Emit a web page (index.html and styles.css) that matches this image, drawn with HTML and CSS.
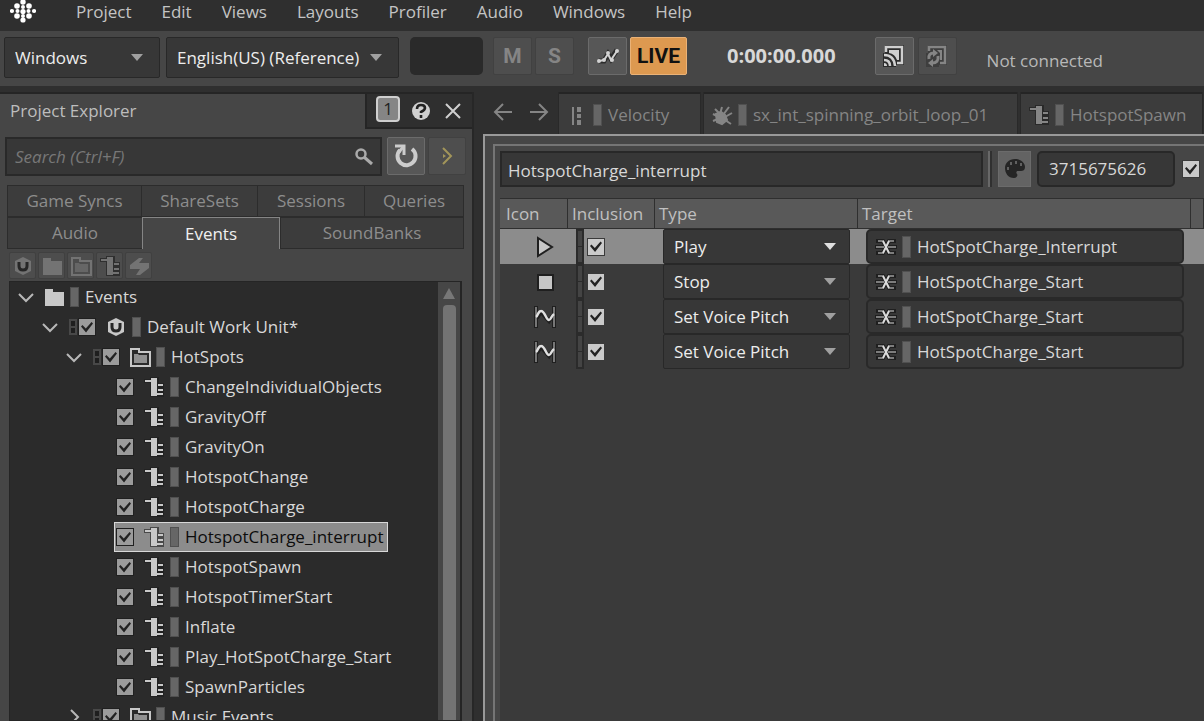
FILE: index.html
```html
<!DOCTYPE html>
<html lang="en">
<head>
  <meta charset="UTF-8" />
  <title>Project Explorer</title>
  <link rel="stylesheet" href="styles.css">
</head>
<body>
  <svg class="sprite" aria-hidden="true">
    <symbol id="event" viewBox="0 0 22 22">
      <path d="M1 3h6V1h9v6h5v14H7V7H1z" fill="#1c1c1c" opacity=".6" />
      <path d="M2 4h6v2H2zM8 2h6v18H8zM15 8h5v2h-5zM15 13h5v2h-5zM14 17h6v2h-6z" fill="currentColor" />
    </symbol>
    <symbol id="folder" viewBox="0 0 22 22">
      <path d="M2 3h8v3h11v14H2z" fill="currentColor" />
    </symbol>
    <symbol id="folder-open" viewBox="0 0 22 22">
      <path d="M2 3h8v3h11v14H2z" fill="none" stroke="currentColor" stroke-width="2" />
      <path d="M5 8h4l1 1h8v8H5z" fill="currentColor" opacity=".65" />
    </symbol>
    <symbol id="unit" viewBox="0 0 22 22">
      <path d="M11 2l8 4v10l-8 4-8-4V6z" fill="currentColor" />
      <path d="M7 7v4q0 4 4 4t4-4V7" fill="none" stroke="#262626" stroke-width="3" />
    </symbol>
    <symbol id="chevron" viewBox="0 0 18 18">
      <path d="M2 6l7 7 7-7" fill="none" stroke="currentColor" stroke-width="2" />
    </symbol>
    <symbol id="pitch" viewBox="0 0 24 24">
      <path d="M3 1v22M21 1v22M4 13l4-6 8 9 4-6" fill="none" stroke="#1f1f1f" stroke-width="4" />
      <path d="M3 2v20M21 2v20" stroke="#d0d0d0" stroke-width="1" />
      <path d="M3 12c2-1 2-6 5-6 4 0 5 9 8 9 2 0 2-4 5-6" fill="none" stroke="#e0e0e0" stroke-width="2.500" />
    </symbol>
    <symbol id="container" viewBox="0 0 24 20">
      <path d="M2 4h7l6 12h7M2 16h7l6-12h7M1 10h22" fill="none" stroke="#1f1f1f" stroke-width="4" />
      <path d="M4 4h6M14 4h6M4 16h6M14 16h6M2 10h8M14 10h8" stroke="#dcdcdc" stroke-width="1" />
      <path d="M9 4l6 12M15 4L9 16" stroke="#dcdcdc" stroke-width="2" />
    </symbol>
  </svg>

  <nav class="menubar">
    <svg class="logo" width="26" height="24" viewBox="0 0 26 24" fill="#fff">
      <circle cx="13" cy="2" r="2.7" /><circle cx="7" cy="6" r="2.8" /><circle cx="13" cy="7" r="2" /><circle cx="19" cy="6" r="2.8" />
      <circle cx="2" cy="11" r="2.1" /><circle cx="7.500" cy="11" r="2" /><circle cx="13" cy="11.500" r="2.6" /><circle cx="18.500" cy="11" r="2" /><circle cx="24" cy="11" r="2.1" />
      <circle cx="7" cy="16" r="2.8" /><circle cx="13" cy="16" r="2" /><circle cx="19" cy="16" r="2.8" /><circle cx="13" cy="20" r="2.6" />
    </svg>
    <button>Project</button>
    <button>Edit</button>
    <button>Views</button>
    <button>Layouts</button>
    <button>Profiler</button>
    <button>Audio</button>
    <button>Windows</button>
    <button>Help</button>
  </nav>

  <div class="toolbar">
    <span class="combo platform"><select aria-label="Platform"><option>Windows</option></select></span>
    <span class="combo language"><select aria-label="Language"><option>English(US) (Reference)</option></select></span>
    <div class="meter"></div>
    <div class="group tight">
      <button class="tool off">M</button>
      <button class="tool off">S</button>
    </div>
    <div class="group tight">
      <button class="tool" aria-label="Profile">
        <svg width="24" height="24" viewBox="0 0 24 24">
          <path d="M3 17h5l4-7 3 5 6-9" fill="none" stroke="#2c2c2c" stroke-width="5" />
          <path d="M3 17l5-1 4-6 3 6 6-9" fill="none" stroke="#d2d2d2" stroke-width="2" />
          <g fill="#d2d2d2"><circle cx="3" cy="17" r="2" /><circle cx="8" cy="16" r="2" /><circle cx="12" cy="9" r="2" /><circle cx="16" cy="16" r="2" /><circle cx="21" cy="7" r="2" /></g>
        </svg>
      </button>
      <button class="tool live">LIVE</button>
    </div>
    <span class="time">0:00:00.000</span>
    <div class="group">
      <button class="tool" aria-label="Connect">
        <svg width="24" height="24" viewBox="0 0 24 24" fill="none">
          <path d="M3 1h19v20H14v2H1V9h2z" fill="#2c2c2c" />
          <path d="M4 8V3h16v16h-5" stroke="#cfcfcf" stroke-width="2.500" />
          <path d="M7 6h10v10h-2q-2-6-8-7z" fill="#cfcfcf" />
          <path d="M2 11q10 0 11 11M2 16q6 0 6 6" stroke="#cfcfcf" stroke-width="2.500" />
          <path d="M2 19q3 0 3 3H2z" fill="#cfcfcf" />
        </svg>
      </button>
      <button class="tool off" aria-label="Reconnect">
        <svg width="24" height="24" viewBox="0 0 24 24" fill="none">
          <path d="M3 1h19v20H14v2H1V9h2z" fill="#3e3e3e" />
          <path d="M4 7V3h16v16h-5" stroke="#858585" stroke-width="2.500" />
          <path d="M12 6h5v10h-2V9z" fill="#858585" />
          <path d="M4 15q-1-6 5-6M13 12q1 7-6 7" stroke="#858585" stroke-width="3" />
          <path d="M8 5l5 4-5 4zM8 15l-5 4 5 4z" fill="#858585" />
        </svg>
      </button>
    </div>
    <span class="status">Not connected</span>
  </div>

  <main>
    <section class="explorer">
      <header>
        <h2>Project Explorer</h2>
        <div class="window-buttons">
          <button class="badge">1</button>
          <button aria-label="Help">
            <svg width="22" height="22" viewBox="0 0 22 22">
              <circle cx="11" cy="11" r="9" fill="#d0d0d0" />
              <path d="M7 9q0-4 4-4t4 3q0 2-4 4v1M11 15v3" fill="none" stroke="#222" stroke-width="2.600" />
            </svg>
          </button>
          <button aria-label="Close">
            <svg width="22" height="22" viewBox="0 0 22 22"><path d="M4 4l14 14M18 4L4 18" stroke="#d0d0d0" stroke-width="2" /></svg>
          </button>
        </div>
      </header>

      <div class="search-row">
        <div class="search">
          <input type="text" aria-label="Search" placeholder="Search (Ctrl+F)">
          <svg width="20" height="20" viewBox="0 0 20 20" fill="none" stroke="#aaa">
            <circle cx="7" cy="7" r="4.500" stroke-width="2.500" /><path d="M10 10l8 7" stroke-width="3" />
          </svg>
        </div>
        <button class="tool" aria-label="Refresh">
          <svg width="26" height="28" viewBox="0 0 26 28" fill="none" stroke="#ccc">
            <path d="M7 8a9 9 0 1 0 12-1" stroke-width="4" /><path d="M2 4h9v9" stroke-width="3" /><path d="M11 4L5 11" stroke-width="3" />
          </svg>
        </button>
        <button class="tool off" aria-label="More">
          <svg width="20" height="20" viewBox="0 0 20 20" fill="none" stroke="#a2955a" stroke-width="2"><path d="M6 2l8 8-8 8" /><path d="M6 8l3 2-3 2z" fill="#a2955a" stroke="none" /></svg>
        </button>
      </div>

      <div class="tabs top">
        <button>Game Syncs</button>
        <button>ShareSets</button>
        <button>Sessions</button>
        <button>Queries</button>
      </div>
      <div class="tabs bottom">
        <button>Audio</button>
        <button class="active">Events</button>
        <button>SoundBanks</button>
      </div>

      <div class="create">
        <button aria-label="New work unit"><svg><use href="#unit" /></svg></button>
        <button aria-label="New physical folder"><svg><use href="#folder" /></svg></button>
        <button aria-label="New virtual folder"><svg><use href="#folder-open" /></svg></button>
        <button aria-label="New event"><svg><use href="#event" /></svg></button>
        <button aria-label="New dialogue event">
          <svg viewBox="0 0 22 22"><path d="M2 10l9-7h4l-4 5h10v5l-9 7H8l4-6H2z" fill="currentColor" /></svg>
        </button>
      </div>

      <div class="tree-frame">
        <ul class="tree">
          <li class="root">
            <button class="toggle" aria-label="Collapse"><svg><use href="#chevron" /></svg></button>
            <span class="item"><svg><use href="#folder" /></svg><i></i>Events</span>
          </li>
          <li class="level1">
            <button class="toggle" aria-label="Collapse"><svg><use href="#chevron" /></svg></button>
            <b class="strip"></b>
            <label class="item"><input type="checkbox" checked><svg><use href="#unit" /></svg><i></i>Default Work Unit*</label>
          </li>
          <li class="level2">
            <button class="toggle" aria-label="Collapse"><svg><use href="#chevron" /></svg></button>
            <b class="strip"></b>
            <label class="item"><input type="checkbox" checked><svg><use href="#folder-open" /></svg><i></i>HotSpots</label>
          </li>
          <li class="leaf"><label class="item"><input type="checkbox" checked><svg><use href="#event" /></svg><i></i>ChangeIndividualObjects</label></li>
          <li class="leaf"><label class="item"><input type="checkbox" checked><svg><use href="#event" /></svg><i></i>GravityOff</label></li>
          <li class="leaf"><label class="item"><input type="checkbox" checked><svg><use href="#event" /></svg><i></i>GravityOn</label></li>
          <li class="leaf"><label class="item"><input type="checkbox" checked><svg><use href="#event" /></svg><i></i>HotspotChange</label></li>
          <li class="leaf"><label class="item"><input type="checkbox" checked><svg><use href="#event" /></svg><i></i>HotspotCharge</label></li>
          <li class="leaf"><label class="item selected"><input type="checkbox" checked><svg><use href="#event" /></svg><i></i>HotspotCharge_interrupt</label></li>
          <li class="leaf"><label class="item"><input type="checkbox" checked><svg><use href="#event" /></svg><i></i>HotspotSpawn</label></li>
          <li class="leaf"><label class="item"><input type="checkbox" checked><svg><use href="#event" /></svg><i></i>HotspotTimerStart</label></li>
          <li class="leaf"><label class="item"><input type="checkbox" checked><svg><use href="#event" /></svg><i></i>Inflate</label></li>
          <li class="leaf"><label class="item"><input type="checkbox" checked><svg><use href="#event" /></svg><i></i>Play_HotSpotCharge_Start</label></li>
          <li class="leaf"><label class="item"><input type="checkbox" checked><svg><use href="#event" /></svg><i></i>SpawnParticles</label></li>
          <li class="level2">
            <button class="toggle closed" aria-label="Expand"><svg><use href="#chevron" /></svg></button>
            <b class="strip"></b>
            <label class="item"><input type="checkbox" checked><svg><use href="#folder-open" /></svg><i></i>Music Events</label>
          </li>
        </ul>
        <div class="scrollbar"><span class="up"></span><span class="thumb"></span></div>
      </div>
    </section>

    <section class="editor">
      <div class="documents">
        <button class="nav" aria-label="Back">
          <svg width="22" height="22" viewBox="0 0 22 22" fill="none" stroke="#858585" stroke-width="2"><path d="M11 3l-8 8 8 8M3 11h17" /></svg>
        </button>
        <button class="nav" aria-label="Forward">
          <svg width="22" height="22" viewBox="0 0 22 22" fill="none" stroke="#858585" stroke-width="2"><path d="M11 3l8 8-8 8M19 11H2" /></svg>
        </button>
        <button class="doc velocity">
          <svg viewBox="0 0 22 22" fill="#858585"><path d="M6 3h2v18H6zM11 3h4v5h-4zM11 10h4v4h-4zM11 16h4v5h-4z" /></svg><i></i>Velocity
        </button>
        <button class="doc sound">
          <svg viewBox="0 0 22 22" fill="none" stroke="#858585" stroke-width="2">
            <path d="M5 10l5-2 4 3 2 5-5 4-5-2z" fill="#858585" />
            <path d="M9 10l2-7M12 11l6-8M14 13l7-4M4 5l4 4M2 10l4 2M2 17l5-2M14 16l6 4" />
          </svg><i></i>sx_int_spinning_orbit_loop_01
        </button>
        <button class="doc"><svg><use href="#event" /></svg><i></i>HotspotSpawn</button>
      </div>

      <div class="outer">
        <div class="inner">
          <div class="properties">
            <input type="text" class="name" aria-label="Name" value="HotspotCharge_interrupt">
            <span class="divider"></span>
            <button class="color" aria-label="Color">
              <svg width="22" height="22" viewBox="0 0 22 22">
                <path d="M11 1c6 0 10 4 10 8 0 3-2 4-4 4h-3c-2 0-2 2-1 3s0 4-3 4c-6 0-9-5-9-10s4-9 10-9z" fill="#252525" />
                <g fill="#606060"><rect x="3" y="9" width="2" height="3" /><rect x="6" y="4" width="2" height="3" /><rect x="11" y="3" width="2" height="3" /><rect x="16" y="5" width="2" height="3" /></g>
              </svg>
            </button>
            <input type="text" class="id" aria-label="ID" value="3715675626">
            <input type="checkbox" aria-label="Inclusion" checked>
          </div>

          <table>
            <colgroup><col class="c-icon"><col class="c-inclusion"><col class="c-type"><col class="c-target"><col></colgroup>
            <thead>
              <tr><th>Icon</th><th>Inclusion</th><th>Type</th><th>Target</th><th></th></tr>
            </thead>
            <tbody>
              <tr class="selected">
                <td class="icon"><svg viewBox="0 0 24 24"><path d="M5 3l14 9-14 9z" fill="#c6c6c6" stroke="#1f1f1f" stroke-width="2" /></svg></td>
                <td><div class="inclusion"><b></b><input type="checkbox" aria-label="Include" checked></div></td>
                <td><span class="combo"><select aria-label="Type"><option>Play</option></select></span></td>
                <td><button class="target"><svg><use href="#container" /></svg><i></i>HotSpotCharge_Interrupt</button></td>
                <td></td>
              </tr>
              <tr>
                <td class="icon"><svg viewBox="0 0 24 24"><path d="M5 5h15v15H5z" fill="#c6c6c6" stroke="#1f1f1f" stroke-width="2" /></svg></td>
                <td><div class="inclusion"><b></b><input type="checkbox" aria-label="Include" checked></div></td>
                <td><span class="combo"><select aria-label="Type"><option>Stop</option></select></span></td>
                <td><button class="target"><svg><use href="#container" /></svg><i></i>HotSpotCharge_Start</button></td>
                <td></td>
              </tr>
              <tr>
                <td class="icon"><svg><use href="#pitch" /></svg></td>
                <td><div class="inclusion"><b></b><input type="checkbox" aria-label="Include" checked></div></td>
                <td><span class="combo"><select aria-label="Type"><option>Set Voice Pitch</option></select></span></td>
                <td><button class="target"><svg><use href="#container" /></svg><i></i>HotSpotCharge_Start</button></td>
                <td></td>
              </tr>
              <tr>
                <td class="icon"><svg><use href="#pitch" /></svg></td>
                <td><div class="inclusion"><b></b><input type="checkbox" aria-label="Include" checked></div></td>
                <td><span class="combo"><select aria-label="Type"><option>Set Voice Pitch</option></select></span></td>
                <td><button class="target"><svg><use href="#container" /></svg><i></i>HotSpotCharge_Start</button></td>
                <td></td>
              </tr>
            </tbody>
          </table>
          <div class="empty"></div>
        </div>
      </div>
    </section>
  </main>
</body>
</html>
```
FILE: styles.css
```css
* {
  box-sizing: border-box;
}

body {
  display: flex;
  flex-direction: column;
  height: 100vh;
  margin: 0;
  overflow: hidden;
  background: #2f2f2f;
  color: #d8d8d8;
  font: 17px/24px "Open Sans", "Noto Sans", sans-serif;
}

button, input, select {
  margin: 0;
  padding: 0;
  border: 0;
  background: none;
  color: inherit;
  font: inherit;
}

svg {
  display: block;
  flex: none;
}

.sprite {
  position: absolute;
  width: 0;
  height: 0;
}

/* menu */
.menubar {
  display: flex;
  flex: none;
  gap: 30px;
  height: 31px;
  padding-left: 10px;
  color: #c4c4c4;
}

.menubar button {
  height: 24px;
}

.logo {
  margin-right: 10px;
}

/* toolbar */
.toolbar {
  display: flex;
  flex: none;
  align-items: flex-start;
  height: 55px;
  padding: 6px 4px;
  background: #464646;
}

.combo {
  position: relative;
  display: block;
}

.combo select {
  width: 100%;
  height: 41px;
  padding-left: 10px;
  appearance: none;
  border: 1px solid #282828;
  border-radius: 2px;
  background: #373737;
  color: #ededed;
}

.combo::after {
  content: "";
  position: absolute;
  top: 17px;
  right: 17px;
  border: 6px solid transparent;
  border-top: 7px solid #a0a0a0;
  border-bottom: 0;
  pointer-events: none;
}

.platform {
  width: 156px;
  margin-right: 6px;
}

.language {
  width: 233px;
  margin-right: 11px;
}

.meter {
  width: 73px;
  height: 38px;
  margin-right: 10px;
  border-radius: 5px;
  background: #2a2a2a;
}

.group {
  display: flex;
  gap: 4px;
}

.group.tight {
  gap: 3px;
  margin-right: 14px;
}

.tool {
  display: flex;
  flex: none;
  align-items: center;
  justify-content: center;
  width: 39px;
  height: 38px;
  border: 1px solid #6b6b6b;
  border-radius: 2px;
  background: #575757;
  font: bold 21px/24px Roboto, sans-serif;
}

.tool.off {
  border-color: #414141;
  background: #4e4e4e;
  color: #858585;
}

.tool.live {
  width: 57px;
  border-color: #eab277;
  background: #dd9950;
  color: #111;
}

.time {
  margin: 7px 39px 0 26px;
  font-size: 20px;
  font-weight: bold;
}

.status {
  margin: 12px 0 0 30px;
  color: #b8b8b8;
}

main {
  display: flex;
  flex: 1;
  min-height: 0;
  padding-top: 6px;
}

/* project explorer */
.explorer {
  display: flex;
  flex: none;
  flex-direction: column;
  width: 474px;
  border-right: 2px solid #272727;
  background: #464646;
}

.explorer header {
  display: flex;
  flex: none;
  height: 37px;
  border-top: 2px solid #252525;
}

h2 {
  flex: 1;
  margin: 0;
  padding: 5px 10px;
  color: #bdbdbd;
  font-size: 17px;
  font-weight: normal;
}

.window-buttons {
  display: flex;
  gap: 10px;
  width: 107px;
  padding: 2px 8px;
  border: solid #252525;
  border-width: 0 0 2px 2px;
  background: #2f2f2f;
}

.badge {
  width: 25px;
  height: 26px;
  margin-left: 1px;
  border: 2px solid #cfcfcf;
  border-radius: 4px;
  background: #858585;
  color: #222;
  line-height: 20px;
}

.search-row {
  display: flex;
  gap: 3px;
  padding: 8px 6px 9px 5px;
}

.search {
  display: flex;
  flex: 1;
  align-items: center;
  height: 39px;
  margin-right: 2px;
  padding: 0 6px 0 8px;
  border: 2px solid #292929;
  background: #373737;
}

.search input {
  flex: 1;
  min-width: 0;
  outline: 0;
}

.search input::placeholder {
  color: #777;
  font-style: italic;
}

.search-row .tool {
  width: 38px;
}

.tabs {
  display: grid;
  flex: none;
  height: 32px;
  padding: 0 8px 0 7px;
  color: #8d8d8d;
}

.tabs button {
  border: 1px solid #2c2c2c;
  border-right: 0;
  background: #3c3c3c;
}

.tabs button:last-child {
  border-right: 1px solid #2c2c2c;
}

.tabs.top {
  grid-template-columns: 134fr 116fr 107fr 100fr;
}

.tabs.bottom {
  grid-template-columns: 135fr 138fr 184fr;
}

.tabs button.active {
  border: 1px solid #858585;
  border-bottom: 0;
  background: #464646;
  color: #f0f0f0;
}

.create {
  display: flex;
  gap: 2px;
  padding: 3px 9px 2px;
}

.create button {
  display: grid;
  place-items: center;
  width: 27px;
  height: 27px;
  border: 1px solid #404040;
  border-radius: 2px;
  background: #4d4d4d;
  color: #737373;
}

.create svg {
  width: 22px;
  height: 22px;
}

.tree-frame {
  display: flex;
  flex: 1;
  min-height: 0;
  margin: 0 10px 0 9px;
  border: 1px solid #252525;
  border-right-width: 2px;
  background: #2b2b2b;
}

.tree {
  flex: 1;
  margin: 0;
  padding: 0;
  overflow: hidden;
  list-style: none;
}

.tree li {
  display: flex;
  align-items: center;
  height: 30px;
}

.root {
  padding-left: 7px;
}

.level1 {
  padding-left: 31px;
}

.level2 {
  padding-left: 55px;
}

.leaf {
  padding-left: 104px;
}

.toggle {
  margin-right: 5px;
  color: #b8b8b8;
}

.toggle svg {
  width: 18px;
  height: 18px;
}

.closed svg {
  transform: rotate(-90deg);
}

.strip {
  width: 8px;
  height: 16px;
  margin: 0 -1px 0 5px;
  border: 2px solid #484848;
  background: linear-gradient(#1f1f1f 5px, #484848 5px, #484848 7px, #1f1f1f 7px);
}

.item {
  display: flex;
  align-items: center;
  height: 30px;
  padding: 0 4px 0 2px;
  border: 1px solid transparent;
  white-space: nowrap;
}

.item svg {
  width: 22px;
  height: 22px;
  color: #c8c8c8;
}

.item input {
  margin-right: 10px;
  background: #9b9b9b;
}

.item.selected {
  border-color: #d8d8d8;
  background: #8c8c8c;
  color: #0c0c0c;
}

/* colour tag in front of an object name */
i {
  flex: none;
  width: 9px;
  height: 20px;
  margin: 0 6px 0 5px;
  border: 1px solid #505050;
  background: #666;
}

input[type="checkbox"] {
  display: grid;
  flex: none;
  place-items: center;
  width: 16px;
  height: 16px;
  appearance: none;
  outline: 1px solid #202020;
}

input[type="checkbox"]:checked::before {
  content: "";
  width: 12px;
  height: 11px;
  background: #222;
  clip-path: polygon(0 45%, 12% 32%, 40% 64%, 88% 5%, 100% 18%, 42% 100%);
}

.scrollbar {
  display: flex;
  flex-direction: column;
  align-items: center;
  width: 22px;
  padding-top: 6px;
  background: #464646;
}

.up {
  border: 6px solid transparent;
  border-top: 0;
  border-bottom: 11px solid #777;
}

.thumb {
  flex: 1;
  width: 13px;
  margin-top: 6px;
  border-radius: 4px 4px 0 0;
  background: #737373;
}

/* event editor */
.editor {
  display: flex;
  flex: 1;
  flex-direction: column;
  min-width: 0;
  padding-left: 9px;
}

.documents {
  display: flex;
  flex: none;
  height: 42px;
  overflow: hidden;
  color: #858585;
}

.nav {
  flex: none;
  width: 36px;
  padding: 0 0 2px 9px;
}

.doc {
  display: flex;
  flex: none;
  align-items: center;
  margin-left: 4px;
  padding: 2px 16px 0 7px;
  border-top: 2px solid #252525;
  background: #3c3c3c;
  outline: 1px solid #292929;
  white-space: nowrap;
}

.velocity {
  width: 141px;
}

.sound {
  width: 313px;
}

.doc svg {
  width: 22px;
  height: 22px;
}

.doc i, .target i {
  height: 22px;
}

.outer {
  flex: 1;
  min-height: 0;
  padding: 8px 0 0 8px;
  border: solid #999;
  border-width: 2px 0 0 2px;
  background: #464646;
}

.inner {
  display: flex;
  flex-direction: column;
  height: 100%;
  padding: 5px 0 0 5px;
  border: solid #757575;
  border-width: 2px 0 0 2px;
}

.properties {
  display: flex;
  align-items: center;
  margin-bottom: 11px;
  padding-right: 5px;
}

.name, .id {
  height: 36px;
  border: 2px solid #282828;
  background: #373737;
}

.name {
  flex: 1;
  min-width: 0;
  padding: 2px 0 0 6px;
}

.divider {
  width: 4px;
  height: 36px;
  margin: 0 6px 0 5px;
  border: solid #303030;
  border-width: 0 2px 0 0;
  background: #686868;
}

.color {
  display: grid;
  place-items: center;
  width: 33px;
  height: 36px;
  margin-right: 6px;
  border: 1px solid #6b6b6b;
  background: #636363;
}

.id {
  width: 138px;
  margin-right: 8px;
  padding: 0 10px 2px;
  border-radius: 5px;
}

.properties input[type="checkbox"], .inclusion input {
  background: #cacaca;
  outline-color: #3a3a3a;
}

table {
  width: 100%;
  table-layout: fixed;
  border-spacing: 0;
  background: #3a3a3a;
}

.c-icon {
  width: 68px;
}

.c-inclusion {
  width: 87px;
}

.c-type {
  width: 203px;
}

.c-target {
  width: 333px;
}

th {
  height: 31px;
  padding: 0 4px;
  border: solid #2f2f2f;
  border-width: 1px 1px 1px 0;
  background: #595959;
  color: #c0c0c0;
  font-weight: normal;
  text-align: left;
}

th:first-child {
  padding-left: 6px;
}

td {
  height: 35px;
  padding: 0 8px;
}

td.icon {
  padding: 0 0 0 33px;
}

.icon svg {
  width: 24px;
  height: 24px;
}

tr.selected {
  background: #8c8c8c;
}

.inclusion {
  display: flex;
  align-items: center;
  gap: 4px;
}

.inclusion b {
  width: 8px;
  height: 35px;
  border: 2px solid #2b2b2b;
  background: linear-gradient(#444 15px, #2b2b2b 15px, #2b2b2b 16px, #444 16px);
}

td .combo select {
  display: block;
  height: 35px;
}

td .combo::after {
  top: 14px;
  right: 14px;
}

tr.selected .combo::after {
  border-top-color: #e0e0e0;
}

td:nth-child(4) {
  padding-right: 7px;
}

.target {
  display: flex;
  align-items: center;
  width: 100%;
  height: 35px;
  padding-left: 6px;
  border: 2px solid #292929;
  border-radius: 5px;
  background: #373737;
}

.target svg {
  width: 24px;
  height: 20px;
}

.target i {
  margin-left: 4px;
}

.empty {
  flex: 1;
  background: #3a3a3a;
}
```
